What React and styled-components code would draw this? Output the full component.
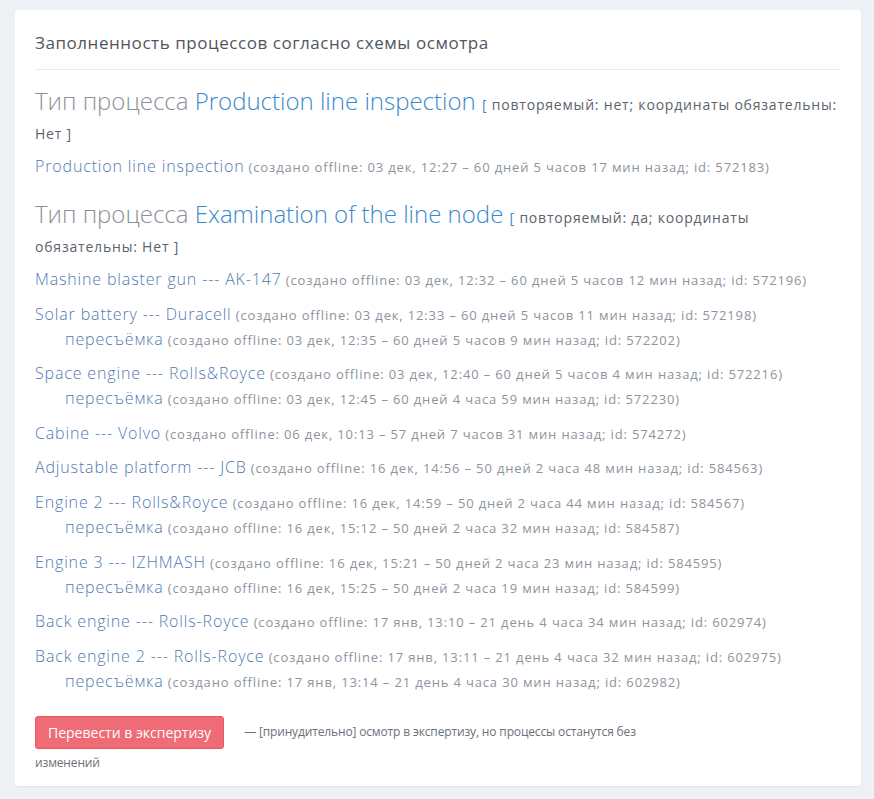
import React from 'react'
import styled, { createGlobalStyle } from 'styled-components'

const GlobalStyle = createGlobalStyle`
  html, body {
    margin: 0;
    padding: 0;
    background: #edf1f5;
    font-family: 'Open Sans', 'Liberation Sans', sans-serif;
  }
`

const Page = styled.div`
  padding: 10px 13px 14px 15px;
`

const Card = styled.div`
  background: #fff;
  border-radius: 3px;
  box-shadow: 0 1px 2px rgba(0, 0, 0, 0.06);
  padding: 20px 20px 9px 20px;
`

const Title = styled.h3`
  margin: 0;
  padding: 1px 0 15px;
  font-size: 17px;
  font-weight: 400;
  letter-spacing: 0.55px;
  color: #505660;
  border-bottom: 1px solid #e8ecf0;
`

const TypeHeader = styled.div`
  margin: ${(p) => (p.first ? '16px' : '20px')} 0 10px;
  font-size: 24px;
  font-weight: 300;
  line-height: 29px;
  color: #8b9099;
`

const TypeName = styled.span`
  color: #3b89cc;
`

const TypeInfo = styled.span`
  font-size: 14px;
  font-weight: 400;
  line-height: 1;
  letter-spacing: 0.8px;
  color: #5c636c;
`

const Bracket = styled.span`
  color: #3b89cc;
`

const Item = styled.div`
  margin-bottom: 9.6px;
`

const Row = styled.div`
  font-size: 16px;
  line-height: 25px;
  padding-left: ${(p) => (p.sub ? '30px' : '0')};
  white-space: nowrap;
`

const Label = styled.span`
  font-size: 16px;
  font-weight: 300;
  line-height: 1;
  letter-spacing: 0.85px;
  color: #5179b2;
`

const Meta = styled.span`
  font-size: 13px;
  line-height: 1;
  letter-spacing: 0.85px;
  color: #8d949d;
`

const Footer = styled.div`
  margin-top: 22px;
  max-width: 620px;
  font-size: 12px;
  letter-spacing: -0.15px;
  line-height: 28px;
  color: #6a7079;
`

const Button = styled.button`
  display: inline-block;
  vertical-align: middle;
  height: 33px;
  padding: 0 12px;
  margin-right: 20px;
  border: 1px solid #e8555f;
  border-radius: 3px;
  background: #ef6b75;
  color: #fff;
  font-family: inherit;
  font-size: 14px;
  letter-spacing: 0;
  cursor: pointer;
`

const types = [
  {
    name: 'Production line inspection',
    info: 'повторяемый: нет; координаты обязательны: Нет',
    items: [
      {
        label: 'Production line inspection',
        meta: 'создано offline: 03 дек, 12:27 – 60 дней 5 часов 17 мин назад; id: 572183',
      },
    ],
  },
  {
    name: 'Examination of the line node',
    info: 'повторяемый: да; координаты обязательны: Нет',
    items: [
      {
        label: 'Mashine blaster gun --- AK-147',
        meta: 'создано offline: 03 дек, 12:32 – 60 дней 5 часов 12 мин назад; id: 572196',
      },
      {
        label: 'Solar battery --- Duracell',
        meta: 'создано offline: 03 дек, 12:33 – 60 дней 5 часов 11 мин назад; id: 572198',
        redo: 'создано offline: 03 дек, 12:35 – 60 дней 5 часов 9 мин назад; id: 572202',
      },
      {
        label: 'Space engine --- Rolls&Royce',
        meta: 'создано offline: 03 дек, 12:40 – 60 дней 5 часов 4 мин назад; id: 572216',
        redo: 'создано offline: 03 дек, 12:45 – 60 дней 4 часа 59 мин назад; id: 572230',
      },
      {
        label: 'Cabine --- Volvo',
        meta: 'создано offline: 06 дек, 10:13 – 57 дней 7 часов 31 мин назад; id: 574272',
      },
      {
        label: 'Adjustable platform --- JCB',
        meta: 'создано offline: 16 дек, 14:56 – 50 дней 2 часа 48 мин назад; id: 584563',
      },
      {
        label: 'Engine 2 --- Rolls&Royce',
        meta: 'создано offline: 16 дек, 14:59 – 50 дней 2 часа 44 мин назад; id: 584567',
        redo: 'создано offline: 16 дек, 15:12 – 50 дней 2 часа 32 мин назад; id: 584587',
      },
      {
        label: 'Engine 3 --- IZHMASH',
        meta: 'создано offline: 16 дек, 15:21 – 50 дней 2 часа 23 мин назад; id: 584595',
        redo: 'создано offline: 16 дек, 15:25 – 50 дней 2 часа 19 мин назад; id: 584599',
      },
      {
        label: 'Back engine --- Rolls-Royce',
        meta: 'создано offline: 17 янв, 13:10 – 21 день 4 часа 34 мин назад; id: 602974',
      },
      {
        label: 'Back engine 2 --- Rolls-Royce',
        meta: 'создано offline: 17 янв, 13:11 – 21 день 4 часа 32 мин назад; id: 602975',
        redo: 'создано offline: 17 янв, 13:14 – 21 день 4 часа 30 мин назад; id: 602982',
      },
    ],
  },
]

export default function App() {
  return (
    <>
      <GlobalStyle />
      <Page>
        <Card>
          <Title>Заполненность процессов согласно схемы осмотра</Title>
          {types.map((t, i) => (
            <div key={t.name}>
              <TypeHeader first={i === 0}>
                Тип процесса <TypeName>{t.name}</TypeName>{' '}
                <TypeInfo>
                  <Bracket>[</Bracket> {t.info} ]
                </TypeInfo>
              </TypeHeader>
              {t.items.map((it) => (
                <Item key={it.label}>
                  <Row>
                    <Label>{it.label}</Label> <Meta>({it.meta})</Meta>
                  </Row>
                  {it.redo && (
                    <Row sub>
                      <Label>пересъёмка</Label> <Meta>({it.redo})</Meta>
                    </Row>
                  )}
                </Item>
              ))}
            </div>
          ))}
          <Footer>
            <Button>Перевести в экспертизу</Button>
            — [принудительно] осмотр в экспертизу, но процессы останутся без изменений
          </Footer>
        </Card>
      </Page>
    </>
  )
}
